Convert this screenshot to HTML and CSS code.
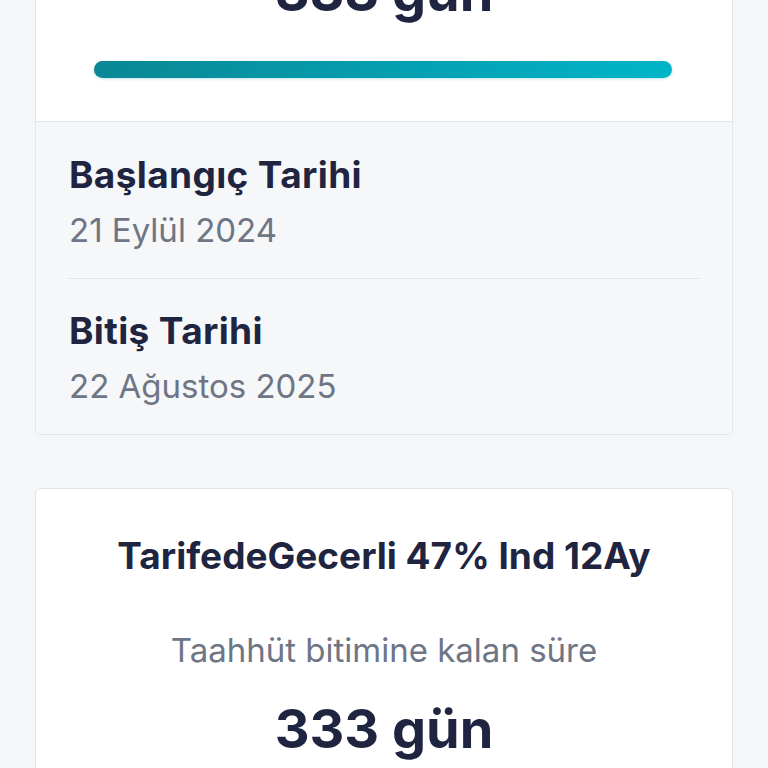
FILE: index.html
```html
<!DOCTYPE html>
<html lang="tr">
<head>
  <meta charset="UTF-8">
  <meta name="viewport" content="width=device-width, initial-scale=1.0">
  <title>Taahhüt Bilgileri</title>
  <link rel="stylesheet" href="styles.css">
</head>
<body>
  <main class="page">
    <!-- Current commitment -->
    <section class="card">
      <div class="card-head">
        <h2 class="plan-name">TarifedeGecerli 47% Ind 12Ay</h2>
        <p class="remaining-label">Taahhüt bitimine kalan süre</p>
        <p class="remaining-days">333 gün</p>
        <div class="progress">
          <div class="progress-fill" style="width: 100%"></div>
        </div>
      </div>
      <div class="card-dates">
        <div class="date-row">
          <h3>Başlangıç Tarihi</h3>
          <p>21 Eylül 2024</p>
        </div>
        <div class="date-row">
          <h3>Bitiş Tarihi</h3>
          <p>22 Ağustos 2025</p>
        </div>
      </div>
    </section>

    <!-- Second commitment -->
    <section class="card">
      <div class="card-head">
        <h2 class="plan-name">TarifedeGecerli 47% Ind 12Ay</h2>
        <p class="remaining-label">Taahhüt bitimine kalan süre</p>
        <p class="remaining-days">333 gün</p>
        <div class="progress">
          <div class="progress-fill" style="width: 100%"></div>
        </div>
      </div>
      <div class="card-dates">
        <div class="date-row">
          <h3>Başlangıç Tarihi</h3>
          <p>21 Eylül 2024</p>
        </div>
        <div class="date-row">
          <h3>Bitiş Tarihi</h3>
          <p>22 Ağustos 2025</p>
        </div>
      </div>
    </section>
  </main>
</body>
</html>
```

FILE: styles.css
```css
/* General */
body {
  margin: 0;
  font-family: 'Inter', 'Noto Sans', sans-serif;
  background: #f5f6f8;
  color: #1f2540;
}

/* the list is scrolled down past the first plan name */
.page {
  margin-top: -249px;
  padding: 0 35px 40px;
  display: flex;
  flex-direction: column;
  gap: 53px;
}

/* Card */
.card {
  background: #fff;
  border: 1px solid #e2e5e9;
  border-radius: 6px;
  overflow: hidden;
}

.card-head {
  padding: 45px 0 43px;
  text-align: center;
  border-bottom: 1px solid #e2e5e9;
}

.plan-name {
  margin: 0;
  font-size: 37px;
  line-height: 44px;
  font-weight: 700;
}

.remaining-label {
  margin: 52px 0 0;
  font-size: 33px;
  line-height: 40px;
  color: #6e7585;
}

.remaining-days {
  margin: 25px 0 0;
  font-size: 54px;
  line-height: 67px;
  font-weight: 700;
}

.progress {
  margin: 36px 60px 0 58px;
  height: 17px;
  border-radius: 9px;
  background: #e6eaee;
  box-shadow: 0 1px 3px rgba(0, 140, 160, 0.25);
}

.progress-fill {
  height: 100%;
  border-radius: 9px;
  background: linear-gradient(90deg, #0a8794, #00b5c9);
}

/* Dates */
.card-dates {
  background: #f6f7f9;
  padding: 0 33px;
}

.date-row {
  padding: 31px 0 28px;
}

.date-row + .date-row {
  border-top: 1px solid #dfe2e6;
  padding-top: 30px;
}

.date-row h3 {
  margin: 0;
  font-size: 37px;
  line-height: 44px;
  font-weight: 700;
  letter-spacing: 0.01em;
}

.date-row p {
  margin: 13px 0 0;
  font-size: 33px;
  line-height: 40px;
  color: #6e7585;
}
```
